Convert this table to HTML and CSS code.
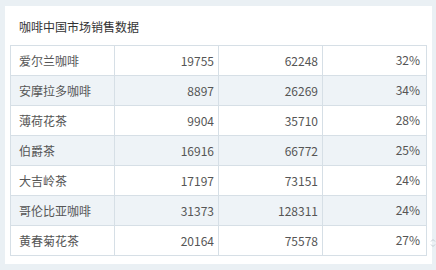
FILE: index.html
```html
<!DOCTYPE html>
<html>
<head>
<meta charset="utf-8">
<link rel="stylesheet" href="styles.css">
</head>
<body>
<div class="card">
  <div class="title">咖啡中国市场销售数据</div>
  <table class="grid">
    <tr><td class="name">爱尔兰咖啡</td><td class="num">19755</td><td class="num">62248</td><td class="pct">32%</td></tr>
    <tr><td class="name">安摩拉多咖啡</td><td class="num">8897</td><td class="num">26269</td><td class="pct">34%</td></tr>
    <tr><td class="name">薄荷花茶</td><td class="num">9904</td><td class="num">35710</td><td class="pct">28%</td></tr>
    <tr><td class="name">伯爵茶</td><td class="num">16916</td><td class="num">66772</td><td class="pct">25%</td></tr>
    <tr><td class="name">大吉岭茶</td><td class="num">17197</td><td class="num">73151</td><td class="pct">24%</td></tr>
    <tr><td class="name">哥伦比亚咖啡</td><td class="num">31373</td><td class="num">128311</td><td class="pct">24%</td></tr>
    <tr><td class="name">黄春菊花茶</td><td class="num">20164</td><td class="num">75578</td><td class="pct">27%</td></tr>
  </table>
</div>
<svg class="scroll" width="6" height="12" viewBox="0 0 6 12"><path d="M1 4.5 L3 2.5 L5 4.5 M1 7.5 L3 9.5 L5 7.5" fill="none" stroke="#c4ccd3" stroke-width="1"/></svg>
</body>
</html>
```
FILE: styles.css
```css
html, body {
  margin: 0;
  padding: 0;
}
body {
  background: #eaf0f4;
  width: 436px;
  height: 270px;
  font-family: "Noto Sans CJK SC", "Noto Sans", sans-serif;
  position: relative;
  overflow: hidden;
}
.card {
  margin: 6px 0 0 5px;
  width: 427px;
  height: 258px;
  background: #fff;
  padding: 0 5px 0 5px;
  box-sizing: border-box;
}
.title {
  height: 39px;
  line-height: 42px;
  padding-left: 9px;
  font-size: 12px;
  color: #333;
}
.grid {
  width: 417px;
  border-collapse: collapse;
  table-layout: fixed;
  font-size: 12px;
  color: #555;
}
.grid td {
  border: 1px solid #d6dfe6;
  height: 30px;
  padding: 0;
  box-sizing: border-box;
}
.grid tr:nth-child(even) td {
  background: #eef3f7;
}
.name {
  padding-left: 8px !important;
}
.num {
  text-align: right;
  padding-right: 4px !important;
}
.pct {
  text-align: right;
  padding-right: 6px !important;
  vertical-align: top;
  padding-top: 5px !important;
}
.scroll {
  position: absolute;
  left: 430px;
  top: 237px;
}
```
